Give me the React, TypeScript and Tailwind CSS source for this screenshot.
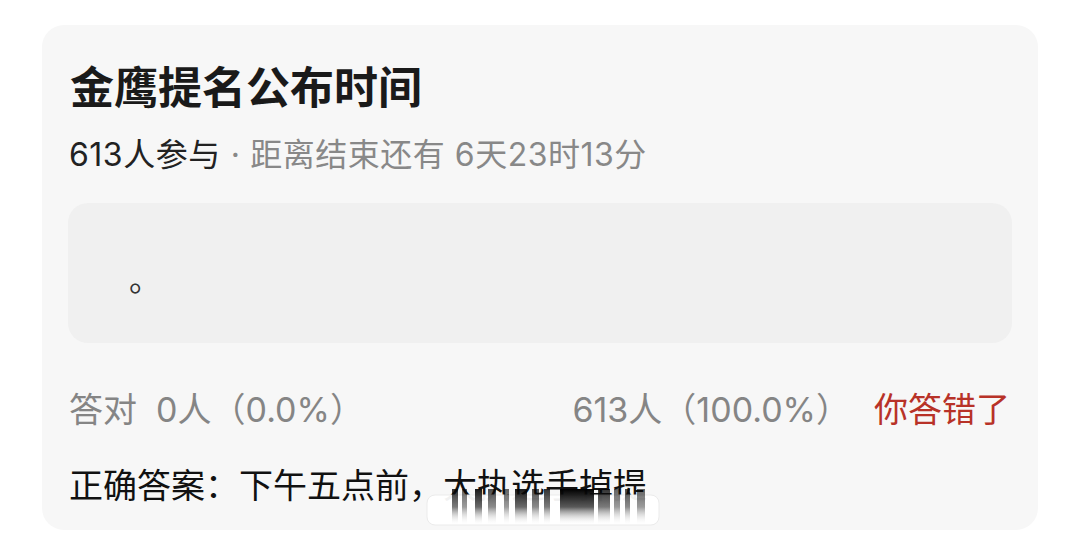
import React from 'react'

const FONT = { fontFamily: 'Inter, "Noto Sans CJK SC", "Noto Sans", sans-serif' }

// 截图水印：半透明白底 + 竖向拖影
function Watermark() {
  const stripes = [
    { x: 30, w: 6, o: 0.8 },
    { x: 40, w: 5, o: 0.6 },
    { x: 53, w: 7, o: 0.9 },
    { x: 66, w: 8, o: 0.7 },
    { x: 82, w: 5, o: 0.6 },
    { x: 93, w: 12, o: 0.9 },
    { x: 110, w: 7, o: 0.7 },
    { x: 122, w: 6, o: 0.8 },
    { x: 138, w: 34, o: 1 },
    { x: 176, w: 12, o: 0.8 },
    { x: 192, w: 6, o: 0.6 },
    { x: 203, w: 5, o: 0.7 },
    { x: 215, w: 8, o: 0.6 },
  ]
  return (
    <svg width="240" height="56" viewBox="0 0 240 56" className="pointer-events-none absolute left-[380px] top-[452px]">
      <defs>
        <linearGradient id="smear" x1="0" y1="0" x2="0" y2="1">
          <stop offset="0" stopColor="#000" stopOpacity="1" />
          <stop offset="0.5" stopColor="#222" stopOpacity="0.75" />
          <stop offset="1" stopColor="#fff" stopOpacity="0" />
        </linearGradient>
      </defs>
      <rect x="5" y="18" width="232" height="30" rx="8" fill="#fff" fillOpacity="0.94" stroke="#ebebeb" />
      {stripes.map((s) => (
        <rect key={s.x} x={s.x} y="12" width={s.w} height="36" fill="url(#smear)" opacity={s.o} />
      ))}
    </svg>
  )
}

export default function App() {
  return (
    <div className="min-h-[535px] bg-white pt-[25px] px-[42px]" style={FONT}>
      <div className="relative rounded-[22px] bg-[#f7f7f7] px-[26px] pt-[37px] pb-[24px]">
        <h1 className="text-[44px] leading-[52px] font-bold text-[#1a1a1a] pl-[2px]">金鹰提名公布时间</h1>

        <p className="mt-[21px] text-[32px] leading-[40px] tracking-[0.5px] text-[#888] pl-[1px]">
          <span className="text-[#222]">613人参与</span>
          <span className="mx-[10px]">·</span>
          距离结束还有 6天23时13分
        </p>

        <div className="mt-[28px] h-[140px] rounded-[20px] bg-[#f0f0f0] pl-[61px] pt-[57px] text-[32px] leading-[40px] text-[#333]">
          。
        </div>

        <div className="mt-[47px] flex items-center text-[34px] leading-[40px] text-[#858585] pl-[1px]">
          <span>答对&nbsp; 0人（0.0%）</span>
          <span className="ml-auto">613人（100.0%）</span>
          <span className="ml-[24px] mr-[2px] text-[#b83228]">你答错了</span>
        </div>

        <p className="mt-[36px] text-[34px] leading-[40px] text-[#111] pl-[1px]">
          正确答案：下午五点前，大执选手掉提
        </p>

        <Watermark />
      </div>
    </div>
  )
}
